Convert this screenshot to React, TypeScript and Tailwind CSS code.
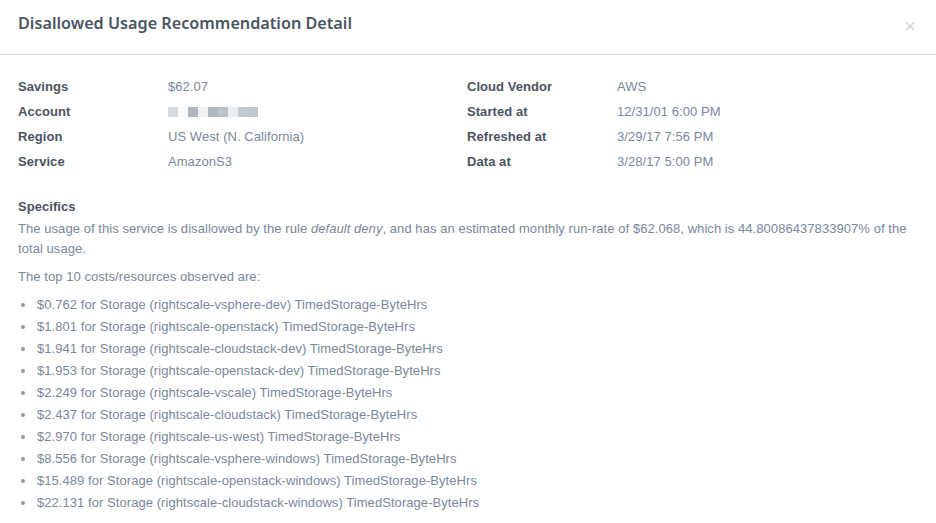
import React from "react";

const left = [
  ["Savings", "$62.07"],
  ["Account", null],
  ["Region", "US West (N. California)"],
  ["Service", "AmazonS3"],
];
const right = [
  ["Cloud Vendor", "AWS"],
  ["Started at", "12/31/01 6:00 PM"],
  ["Refreshed at", "3/29/17 7:56 PM"],
  ["Data at", "3/28/17 5:00 PM"],
];
const blocks = ["#d5dbe0", "#f8f9fb", "#adb6c1", "#eff1f3", "#b0b8c2", "#bcc3cb", "#e9ebed", "#c5cbd3", "#bfc6ce"];
const items = [
  "$0.762 for Storage (rightscale-vsphere-dev) TimedStorage-ByteHrs",
  "$1.801 for Storage (rightscale-openstack) TimedStorage-ByteHrs",
  "$1.941 for Storage (rightscale-cloudstack-dev) TimedStorage-ByteHrs",
  "$1.953 for Storage (rightscale-openstack-dev) TimedStorage-ByteHrs",
  "$2.249 for Storage (rightscale-vscale) TimedStorage-ByteHrs",
  "$2.437 for Storage (rightscale-cloudstack) TimedStorage-ByteHrs",
  "$2.970 for Storage (rightscale-us-west) TimedStorage-ByteHrs",
  "$8.556 for Storage (rightscale-vsphere-windows) TimedStorage-ByteHrs",
  "$15.489 for Storage (rightscale-openstack-windows) TimedStorage-ByteHrs",
  "$22.131 for Storage (rightscale-cloudstack-windows) TimedStorage-ByteHrs",
];

function Col({ rows }: { rows: (string | null)[][] }) {
  return (
    <div className="flex w-[449px] flex-col">
      {rows.map(([k, v]) => (
        <div key={k as string} className="flex h-[25px] items-center">
          <div className="w-[150px] font-bold text-[#4b5461]">{k}</div>
          {v === null ? (
            <div className="flex h-[10px]">
              {blocks.map((c, i) => (
                <div key={i} className="h-[10px] w-[10px]" style={{ backgroundColor: c }} />
              ))}
            </div>
          ) : (
            <div className="text-[#7a889b]">{v}</div>
          )}
        </div>
      ))}
    </div>
  );
}

export default function App() {
  return (
    <div className="h-[523px] w-[936px] overflow-hidden bg-white font-['Liberation_Sans',Arial,sans-serif] text-[13px] tracking-[0.06px]">
      <div className="flex h-[55px] items-start justify-between border-b border-[#d8d8d8] pl-[18px] pr-[20px]">
        <div className="pt-[11px] font-['Noto_Sans',sans-serif] text-[16.2px] font-semibold tracking-normal text-[#4a5561]">
          Disallowed Usage Recommendation Detail
        </div>
        <div className="pt-[16px] text-[20px] leading-none text-[#d5d5d5]">×</div>
      </div>
      <div className="px-[18px] pt-[19px]">
        <div className="flex">
          <Col rows={left} />
          <Col rows={right} />
        </div>
        <div className="mt-[23px] font-bold text-[#4b5461]">Specifics</div>
        <p className="mt-[2px] w-[900px] leading-[20px] text-[#7a889b]">
          The usage of this service is disallowed by the rule <i>default deny</i>, and has an estimated monthly run-rate of $62.068, which is 44.80086437833907% of the total usage.
        </p>
        <p className="mt-[8px] leading-[20px] text-[#7a889b]">The top 10 costs/resources observed are:</p>
        <ul className="mt-[7px] flex flex-col text-[#7a889b]">
          {items.map((t) => (
            <li key={t} className="flex h-[22px] items-center">
              <span className="ml-[3px] mr-[12px] h-[4px] w-[4px] rounded-full bg-[#8c98a8]" />
              {t}
            </li>
          ))}
        </ul>
      </div>
    </div>
  );
}
